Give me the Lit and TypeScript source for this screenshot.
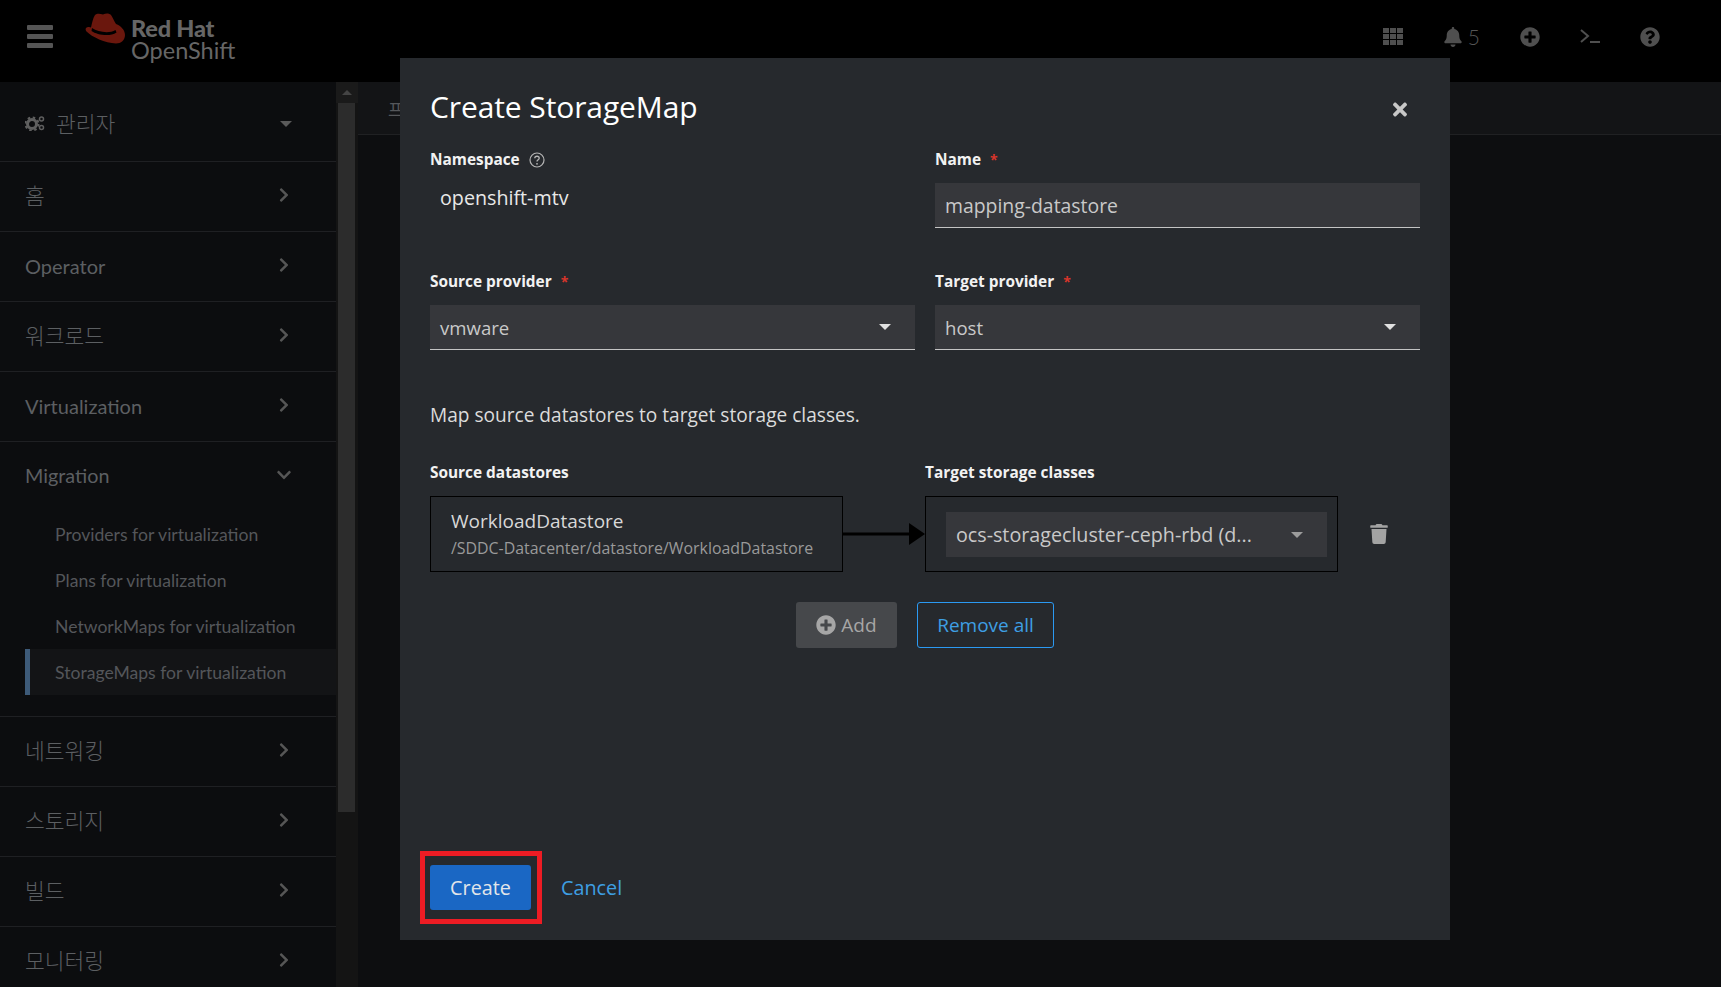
import { LitElement, html, css, svg } from "lit";
import { customElement } from "lit/decorators.js";

const angleRight = svg`<path d="M285.476 272.971L91.132 467.314c-9.373 9.373-24.569 9.373-33.941 0l-22.667-22.667c-9.357-9.357-9.375-24.522-.04-33.901L188.505 256 34.484 101.255c-9.335-9.379-9.317-24.544.04-33.901l22.667-22.667c9.373-9.373 24.569-9.373 33.941 0L285.475 239.03c9.373 9.372 9.373 24.568.001 33.941z"/>`;
const plusCircle = svg`<path d="M256 8C119 8 8 119 8 256s111 248 248 248 248-111 248-248S393 8 256 8zm144 276c0 6.6-5.4 12-12 12h-92v92c0 6.6-5.4 12-12 12h-56c-6.6 0-12-5.4-12-12v-92h-92c-6.6 0-12-5.4-12-12v-56c0-6.6 5.4-12 12-12h92v-92c0-6.6 5.4-12 12-12h56c6.6 0 12 5.4 12 12v92h92c6.6 0 12 5.4 12 12v56z"/>`;
const questionCircle = svg`<path d="M504 256c0 136.997-111.043 248-248 248S8 392.997 8 256C8 119.083 119.043 8 256 8s248 111.083 248 248zM262.655 90c-54.497 0-89.255 22.957-116.549 63.758-3.536 5.286-2.353 12.415 2.715 16.258l34.699 26.31c5.205 3.947 12.621 3.008 16.665-2.122 17.864-22.658 30.113-35.797 57.303-35.797 20.429 0 45.698 13.148 45.698 32.958 0 14.976-12.363 22.667-32.534 33.976C247.128 238.528 216 254.941 216 296v4c0 6.627 5.373 12 12 12h56c6.627 0 12-5.373 12-12v-1.333c0-28.462 83.186-29.647 83.186-106.667 0-58.002-60.165-102-116.531-102zM256 338c-25.365 0-46 20.635-46 46 0 25.364 20.635 46 46 46s46-20.636 46-46c0-25.365-20.635-46-46-46z"/>`;
const bell = svg`<path d="M224 512c35.32 0 63.97-28.65 63.97-64H160.03c0 35.35 28.65 64 63.97 64zm215.39-149.71c-19.32-20.76-55.47-51.99-55.47-154.29 0-77.7-54.48-139.9-127.94-155.16V32c0-17.67-14.32-32-31.98-32s-31.98 14.33-31.98 32v20.84C118.56 68.1 64.08 130.3 64.08 208c0 102.3-36.15 133.53-55.47 154.29-6 6.45-8.66 14.16-8.61 21.71.11 16.4 12.98 32 32.1 32h383.8c19.12 0 32-15.6 32.1-32 .05-7.55-2.61-15.27-8.61-21.71z"/>`;
const trash = svg`<path d="M432 32H312l-9.4-18.7A24 24 0 0 0 281.1 0H166.8a23.72 23.72 0 0 0-21.4 13.3L136 32H16A16 16 0 0 0 0 48v32a16 16 0 0 0 16 16h416a16 16 0 0 0 16-16V48a16 16 0 0 0-16-16zM53.2 467a48 48 0 0 0 47.9 45h245.8a48 48 0 0 0 47.9-45L416 128H32z"/>`;
const times = svg`<path d="M242.72 256l100.07-100.07c12.28-12.28 12.28-32.19 0-44.48l-22.24-22.24c-12.28-12.28-32.19-12.28-44.48 0L176 189.28 75.93 89.21c-12.28-12.28-32.19-12.28-44.48 0L9.21 111.45c-12.28 12.28-12.28 32.19 0 44.48L109.28 256 9.21 356.07c-12.28 12.28-12.28 32.19 0 44.48l22.24 22.24c12.28 12.28 32.2 12.28 44.48 0L176 322.72l100.07 100.07c12.28 12.28 32.2 12.28 44.48 0l22.24-22.24c12.28-12.28 12.28-32.19 0-44.48L242.72 256z"/>`;

const navItems = ["홈", "Operator", "워크로드", "Virtualization"];
const subItems = [
  "Providers for virtualization",
  "Plans for virtualization",
  "NetworkMaps for virtualization",
];
const lowerItems = ["네트워킹", "스토리지", "빌드", "모니터링"];

// Korean labels need a larger size to match the reference's fallback font
const isKo = (s: string) => /[가-힣]/.test(s);

@customElement("app-root")
export class AppRoot extends LitElement {
  static styles = css`
    :host {
      display: block;
      position: relative;
      width: 1721px;
      height: 987px;
      overflow: hidden;
      background: #0d0e10;
      font-family: "Lato", "Noto Sans CJK KR", sans-serif;
      font-size: 18px;
    }
    svg {
      display: block;
      fill: currentColor;
    }
    .masthead {
      height: 82px;
      box-sizing: border-box;
      padding-bottom: 9px;
      background: #000;
      display: flex;
      align-items: center;
      color: #4f4f4f;
    }
    .burger {
      width: 26px;
      margin-left: 27px;
      display: flex;
      flex-direction: column;
      gap: 4px;
    }
    .burger span {
      height: 5px;
      border-radius: 1px;
      background: #555;
    }
    .logo {
      margin-left: 32px;
      margin-top: 4px;
      display: flex;
      gap: 6px;
      align-items: flex-start;
    }
    .logo svg {
      margin-top: -3px;
    }
    .logo-text {
      color: #666;
      font-size: 23.5px;
      line-height: 22px;
      padding-top: 1px;
    }
    .logo-text b {
      display: block;
      font-weight: 900;
      letter-spacing: -0.2px;
    }
    .actions {
      margin-left: auto;
      margin-right: 61px;
      display: flex;
      align-items: center;
    }
    .count {
      font-size: 21px;
      font-weight: 300;
      color: #555;
      margin-left: 6px;
      line-height: 20px;
    }
    .apps {
      display: grid;
      grid-template-columns: repeat(3, 6px);
      grid-auto-rows: 5px;
      gap: 1px;
      margin-right: 41px;
    }
    .apps i {
      background: #4f4f4f;
    }
    .notify {
      display: flex;
      align-items: center;
      margin-right: 40px;
    }
    .plus {
      margin-right: 40px;
    }
    .term {
      margin-right: 40px;
    }
    .body {
      display: flex;
      height: 905px;
    }
    .sidebar {
      width: 336px;
      flex: none;
      background: #0c0d0f;
      color: #5c5f62;
    }
    .nav-item {
      height: 70px;
      border-bottom: 1px solid #1f2023;
      box-sizing: border-box;
      padding: 0 47px 2px 25px;
      display: flex;
      align-items: center;
      justify-content: space-between;
      font-size: 20px;
    }
    .ko {
      font-size: 21.5px;
      font-weight: 300;
      margin-top: -2px;
    }
    .nav-item.first {
      height: 80px;
      padding-top: 6px;
    }
    .nav-item .chev {
      width: 10px;
      height: 16px;
      margin-top: -2px;
      color: #565656;
    }
    .perspective {
      display: flex;
      align-items: center;
      gap: 11px;
    }
    .caret {
      width: 0;
      height: 0;
      border-left: 6px solid transparent;
      border-right: 6px solid transparent;
      border-top: 6px solid #5a5a5a;
      margin-right: -3px;
    }
    .group {
      height: 275px;
      border-bottom: 1px solid #1f2023;
      box-sizing: border-box;
    }
    .group-head {
      height: 69px;
      padding: 0 44px 3px 25px;
      box-sizing: border-box;
      display: flex;
      align-items: center;
      justify-content: space-between;
      font-size: 19.8px;
    }
    .group-head svg {
      width: 16px;
      height: 16px;
      color: #565656;
    }
    .sub {
      height: 46px;
      padding-left: 55px;
      display: flex;
      align-items: center;
      font-size: 17.6px;
      color: #54565a;
    }
    .sub.active {
      margin-left: 25px;
      padding-left: 25px;
      border-left: 5px solid #3d5a78;
      background: #131416;
      box-sizing: border-box;
    }
    .scroll {
      width: 22px;
      flex: none;
      background: #141414;
      box-sizing: border-box;
      padding: 0 3px 0 2px;
    }
    .scroll .up {
      height: 21px;
      display: flex;
      align-items: center;
      justify-content: center;
      background: #1a1a1a;
      margin: 0 -3px 0 -2px;
    }
    .scroll .up i {
      border-left: 5px solid transparent;
      border-right: 5px solid transparent;
      border-bottom: 5px solid #444;
    }
    .scroll .thumb {
      height: 709px;
      background: #2c2c2c;
    }
    .content {
      flex: 1;
    }
    .toolbar {
      height: 53px;
      box-sizing: border-box;
      background: #131416;
      border-bottom: 1px solid #202123;
      padding-left: 30px;
      display: flex;
      align-items: center;
      color: #55575a;
      font-size: 17px;
    }
    .modal {
      position: absolute;
      left: 400px;
      top: 58px;
      width: 1050px;
      height: 882px;
      box-sizing: border-box;
      background: #26292d;
      padding: 30px;
      color: #fff;
      display: flex;
      flex-direction: column;
      font-family: "Open Sans", sans-serif;
    }
    .modal-head {
      display: flex;
      justify-content: space-between;
      align-items: flex-start;
      height: 62px;
      padding-right: 13px;
    }
    h1 {
      margin: 0;
      font-size: 30px;
      line-height: 38px;
      font-weight: 400;
      color: #fff;
      letter-spacing: -0.1px;
    }
    .close {
      width: 14px;
      height: 21px;
      margin-top: 11px;
      color: #c7c7c7;
    }
    .form {
      display: grid;
      grid-template-columns: 485px 485px;
      column-gap: 20px;
    }
    .field {
      height: 122px;
    }
    label,
    .col-label {
      display: flex;
      align-items: center;
      font-size: 15.4px;
      font-weight: 700;
      line-height: 20px;
      height: 20px;
      color: #f2f2f2;
    }
    label svg {
      width: 16px;
      height: 16px;
      margin-left: 9px;
      color: #b5b5b5;
    }
    .req {
      color: #d8352b;
      margin-left: 9px;
      font-size: 14px;
    }
    .static {
      padding: 14px 10px 0;
      line-height: 28px;
      color: #e8e8e8;
      font-size: 19.7px;
    }
    .input {
      margin-top: 13px;
      height: 45px;
      box-sizing: border-box;
      background: #36373b;
      border-bottom: 1px solid #c4c4c4;
      padding: 0 11px 0 10px;
      display: flex;
      align-items: center;
      justify-content: space-between;
      color: #c9c9c9;
      font-size: 19.4px;
    }
    .input.select {
      font-size: 18.6px;
    }
    .sel-caret {
      border-left: 6px solid transparent;
      border-right: 6px solid transparent;
      border-top: 6px solid #e0e0e0;
      margin-right: 13px;
    }
    .hint {
      margin: 0;
      height: 59px;
      line-height: 26px;
      padding-top: 8px;
      color: #dcdcdc;
      font-size: 19.1px;
    }
    .mapping {
      display: grid;
      grid-template-columns: 413px 82px 413px 1fr;
      align-items: center;
    }
    .col-label {
      height: 23px;
      align-self: start;
      margin-bottom: 12px;
    }
    .col-gap {
      grid-column: 2;
    }
    .box {
      height: 76px;
      box-sizing: border-box;
      border: 1px solid #000;
    }
    .source {
      padding: 11px 20px 0;
    }
    .source .title {
      font-size: 19px;
      line-height: 26px;
      color: #d8d8d8;
    }
    .source .path {
      font-size: 15.9px;
      line-height: 22px;
      margin-top: 3px;
      color: #9a9a9a;
    }
    .target {
      padding: 15px 10px 0 20px;
    }
    .target .input {
      margin: 0;
      border: 0;
      padding: 0 10px;
      background: #36373b;
      font-size: 19.7px;
    }
    .target .sel-caret {
      border-top-color: #9c9c9c;
      margin-right: 14px;
    }
    .arrow {
      width: 82px;
      height: 22px;
      color: #000;
    }
    .del {
      width: 18px;
      height: 20px;
      margin-left: 32px;
      color: #a3a3a3;
    }
    .row-actions {
      margin-top: 30px;
      margin-left: 366px;
      display: flex;
      gap: 20px;
    }
    .btn {
      height: 46px;
      box-sizing: border-box;
      border-radius: 3px;
      font-size: 19px;
      display: flex;
      align-items: center;
      justify-content: center;
    }
    .add {
      width: 101px;
      gap: 5px;
      background: #46484b;
      color: #a6a6a6;
    }
    .add svg {
      width: 20px;
      height: 20px;
    }
    .outline {
      width: 137px;
      border: 1px solid #2b9af3;
      color: #3e9fe3;
    }
    .footer {
      margin-top: auto;
      display: flex;
      align-items: center;
      gap: 30px;
      position: relative;
    }
    .primary {
      width: 101px;
      height: 45px;
      background: #1a67c4;
      color: #e2e6ea;
      font-size: 19.8px;
    }
    .cancel {
      color: #3e9fe3;
      font-size: 19.8px;
    }
    .highlight {
      position: absolute;
      left: -10px;
      top: -14px;
      width: 122px;
      height: 73px;
      box-sizing: border-box;
      border: 5px solid #ed1c24;
    }
  `;

  private renderChev() {
    return html`<svg class="chev" viewBox="0 0 320 512">${angleRight}</svg>`;
  }

  private renderNav(items: string[]) {
    return items.map(
      (item) => html`<div class="nav-item">
        <span class=${isKo(item) ? "ko" : ""}>${item}</span>${this.renderChev()}
      </div>`,
    );
  }

  private renderMasthead() {
    return html`
      <header class="masthead">
        <div class="burger"><span></span><span></span><span></span></div>
        <div class="logo">
          <svg width="40" height="31" viewBox="0 0 40 31">
            <path
              fill="#6a170d"
              d="M10 2 C12 0 15 .5 18 1.500 C21 0 24 0 26 2 C28 5 29 8 31 11 C36 13 40 17 40 22 C40 27 36 30.500 31 30.500 C20 30 7 24 1.500 18.500 C-.5 16 1 13.500 4 14 L6 14.500 C7 10 8 5 10 2 Z"
            />
            <path
              fill="#000"
              d="M7 15 C13 19 24 21 30.500 17 L31.500 19.500 C25 24 12 22 6.500 18 Z"
            />
          </svg>
          <div class="logo-text"><b>Red Hat</b>OpenShift</div>
        </div>
        <div class="actions">
          <div class="apps">${Array.from({ length: 9 }, () => html`<i></i>`)}</div>
          <div class="notify">
            <svg width="18" height="20" viewBox="0 0 448 512">${bell}</svg>
            <span class="count">5</span>
          </div>
          <svg class="plus" width="20" height="20" viewBox="0 0 512 512">${plusCircle}</svg>
          <svg class="term" width="20" height="15" viewBox="0 0 20 15" style="fill:none">
            <path d="M1 1 L8 7 L1 13" stroke="#4f4f4f" stroke-width="2" fill="none" />
            <path d="M10 13 H20" stroke="#4f4f4f" stroke-width="2" />
          </svg>
          <svg width="20" height="20" viewBox="0 0 512 512">${questionCircle}</svg>
        </div>
      </header>
    `;
  }

  private renderSidebar() {
    return html`
      <nav class="sidebar">
        <div class="nav-item first">
          <span class="perspective ko">
            <svg width="20" height="16" viewBox="0 0 20 16" style="fill:none">
              <circle cx="7" cy="9" r="4.500" stroke="#5f5f5f" stroke-width="3" />
              <circle cx="7" cy="9" r="6.500" stroke="#5f5f5f" stroke-width="2" stroke-dasharray="2.500 2.600" />
              <circle cx="16.500" cy="4" r="2" stroke="#5f5f5f" stroke-width="1.500" />
              <circle cx="16.500" cy="12.500" r="2" stroke="#5f5f5f" stroke-width="1.500" />
            </svg>
            관리자
          </span>
          <i class="caret"></i>
        </div>
        ${this.renderNav(navItems)}
        <div class="group">
          <div class="group-head">
            <span>Migration</span>
            <svg viewBox="0 0 320 512" style="transform:rotate(90deg)">${angleRight}</svg>
          </div>
          ${subItems.map((s) => html`<div class="sub">${s}</div>`)}
          <div class="sub active">StorageMaps for virtualization</div>
        </div>
        ${this.renderNav(lowerItems)}
      </nav>
      <div class="scroll">
        <div class="up"><i></i></div>
        <div class="thumb"></div>
      </div>
    `;
  }

  private renderModal() {
    return html`
      <section class="modal">
        <div class="modal-head">
          <h1>Create StorageMap</h1>
          <svg class="close" viewBox="0 0 352 512">${times}</svg>
        </div>
        <div class="form">
          <div class="field">
            <label>Namespace
              <svg viewBox="0 0 16 16" style="fill:none">
                <circle cx="8" cy="8" r="7" stroke="currentColor" stroke-width="1.200" />
                <path d="M5.800 6.200 C5.800 3.600 10.200 3.600 10.200 6.200 C10.200 7.800 8 7.800 8 9.600" stroke="currentColor" stroke-width="1.300" />
                <circle cx="8" cy="11.800" r="0.900" fill="currentColor" />
              </svg>
            </label>
            <div class="static">openshift-mtv</div>
          </div>
          <div class="field">
            <label>Name <span class="req">*</span></label>
            <div class="input">mapping-datastore</div>
          </div>
          <div class="field">
            <label>Source provider <span class="req">*</span></label>
            <div class="input select">vmware<i class="sel-caret"></i></div>
          </div>
          <div class="field">
            <label>Target provider <span class="req">*</span></label>
            <div class="input select">host<i class="sel-caret"></i></div>
          </div>
        </div>
        <p class="hint">Map source datastores to target storage classes.</p>
        <div class="mapping">
          <div class="col-label">Source datastores</div>
          <div class="col-gap"></div>
          <div class="col-label">Target storage classes</div>
          <div></div>
          <div class="box source">
            <div class="title">WorkloadDatastore</div>
            <div class="path">/SDDC-Datacenter/datastore/WorkloadDatastore</div>
          </div>
          <svg class="arrow" viewBox="0 0 82 22">
            <path d="M0 9.500 H66 V0 L82 11 L66 22 V12.500 H0 Z" />
          </svg>
          <div class="box target">
            <div class="input">ocs-storagecluster-ceph-rbd (d...<i class="sel-caret"></i></div>
          </div>
          <svg class="del" viewBox="0 0 448 512">${trash}</svg>
        </div>
        <div class="row-actions">
          <div class="btn add">
            <svg viewBox="0 0 512 512">${plusCircle}</svg>Add
          </div>
          <div class="btn outline">Remove all</div>
        </div>
        <div class="footer">
          <div class="btn primary">Create</div>
          <span class="cancel">Cancel</span>
          <div class="highlight"></div>
        </div>
      </section>
    `;
  }

  protected render() {
    return html`
      ${this.renderMasthead()}
      <div class="body">
        ${this.renderSidebar()}
        <main class="content">
          <div class="toolbar">프로젝트</div>
        </main>
      </div>
      ${this.renderModal()}
    `;
  }
}
